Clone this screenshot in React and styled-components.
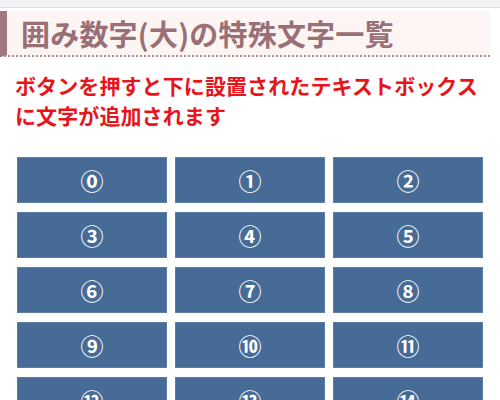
import React from "react";
import styled, { createGlobalStyle } from "styled-components";

const Global = createGlobalStyle`
  html, body { margin: 0; padding: 0; background: #fff; }
  body { font-family: "Noto Sans CJK JP", "Noto Sans", sans-serif; }
`;

const TopBar = styled.div`
  height: 7px;
  background: #f2f3f4;
  border-bottom: 1px solid #dcdcdc;
`;

const Title = styled.h1`
  margin: 3px 10px 0 0;
  height: 44px;
  display: flex;
  align-items: center;
  padding-left: 14px;
  background: #fdf5f4;
  border-left: 7px solid #a0777d;
  border-bottom: 2px dotted #a99095;
  color: #9a7076;
  font-size: 29px;
  font-weight: 700;
  letter-spacing: 0.2px;
  line-height: 1;
`;

const Lead = styled.p`
  margin: 13px 0 0;
  padding: 0 10px 0 15px;
  color: #e8141b;
  font-size: 21px;
  font-weight: 700;
  line-height: 30px;
  letter-spacing: 0.1px;
`;

const Grid = styled.div`
  display: grid;
  grid-template-columns: repeat(3, 150px);
  grid-auto-rows: 46px;
  column-gap: 8px;
  row-gap: 9px;
  margin: 27px 0 0 17px;
`;

const Key = styled.button`
  border: 1px solid #5b7ea6;
  background: #466b97;
  color: #fff;
  font-family: "Noto Sans CJK JP", sans-serif;
  font-size: 23px;
  font-weight: 700;
  padding: 0;
  display: flex;
  align-items: center;
  justify-content: center;
  cursor: pointer;
`;

const chars = ["⓪","①","②","③","④","⑤","⑥","⑦","⑧","⑨","⑩","⑪","⑫","⑬","⑭"];

export default function App() {
  return (
    <>
      <Global />
      <TopBar />
      <Title>囲み数字(大)の特殊文字一覧</Title>
      <Lead>ボタンを押すと下に設置されたテキストボックスに文字が追加されます</Lead>
      <Grid>
        {chars.map((c) => (
          <Key key={c}>{c}</Key>
        ))}
      </Grid>
    </>
  );
}
